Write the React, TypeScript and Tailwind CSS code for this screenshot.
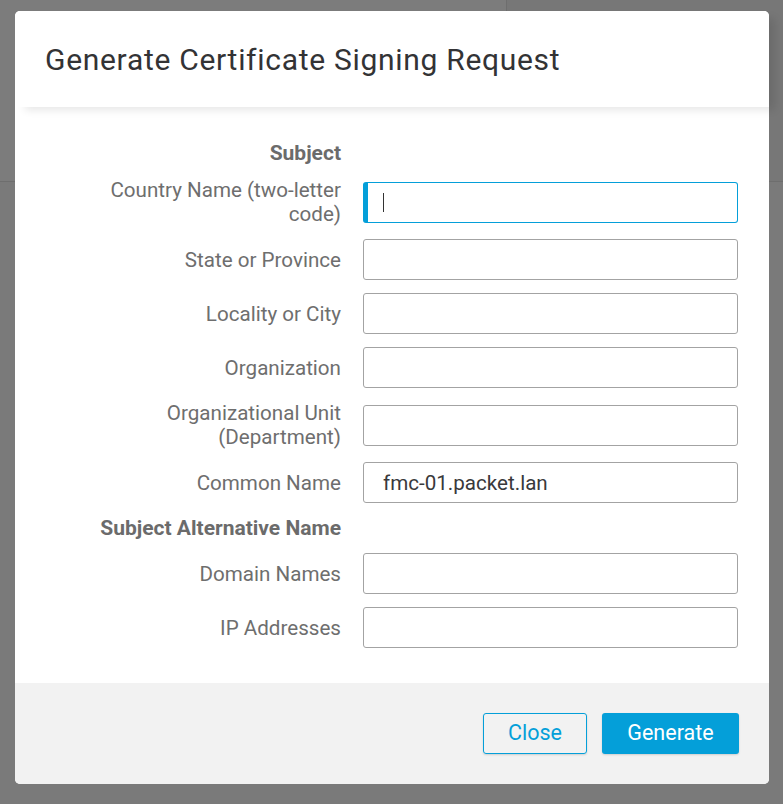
import React from "react"

// Modal "Generate Certificate Signing Request" over a dimmed page.

type Field = { label: string; value?: string; focused?: boolean; heading?: boolean }

const fields: Field[] = [
    { label: "Subject", heading: true },
    { label: "Country Name (two-letter code)", focused: true },
    { label: "State or Province" },
    { label: "Locality or City" },
    { label: "Organization" },
    { label: "Organizational Unit (Department)" },
    { label: "Common Name", value: "fmc-01.packet.lan" },
    { label: "Subject Alternative Name", heading: true },
    { label: "Domain Names" },
    { label: "IP Addresses" },
]

function FormRow({ field }: { field: Field }) {
    if (field.heading) {
        return (
            <div className="flex">
                <div className="w-[250px] text-right text-[21px] leading-6 font-bold text-[#6b6b6b]">{field.label}</div>
            </div>
        )
    }
    return (
        <div className="flex items-center gap-[22px]">
            <label className="w-[250px] text-right text-[20.6px] leading-6 text-[#6e6e6e]">{field.label}</label>
            {field.focused ? (
                <div className="relative">
                    <input
                        readOnly
                        className="h-[41px] w-[375px] rounded-[3px] border border-l-[5px] border-[#049fd9] bg-white pl-[15px] text-[20.6px] text-[#39393b] outline-none"
                    />
                    <span className="absolute top-[11px] left-[20px] h-[19px] w-px bg-[#333]" />
                </div>
            ) : (
                <input
                    readOnly
                    value={field.value ?? ""}
                    className="h-[41px] w-[375px] rounded-[3px] border border-[#a3a3a3] bg-white px-[19px] text-[20.6px] text-[#39393b] outline-none"
                />
            )}
        </div>
    )
}

export default function App() {
    return (
        <div className="relative h-[804px] w-[783px] overflow-hidden bg-[#7a7a7a] font-['Roboto',sans-serif]">
            {/* page behind the overlay */}
            <div className="flex h-[182px] border-b border-[#6e6e6e]">
                <div className="w-[507px] border-r border-[#6e6e6e] bg-[#7c7c7c]" />
                <div className="flex-1 bg-[#777]" />
            </div>

            <div className="absolute top-[11px] left-[15px] flex h-[773px] w-[754px] flex-col rounded-[5px] bg-white">
                <div className="relative z-10 flex h-[96px] items-center rounded-t-[5px] bg-white px-[30px] shadow-[8px_5px_8px_-2px_rgba(0,0,0,0.1)]">
                    <h1 className="text-[30px] tracking-[0.7px] text-[#333335]">Generate Certificate Signing Request</h1>
                </div>

                <div className="flex flex-col gap-[13px] pt-[34px] pr-[30px] pl-[76px]">
                    {fields.map((f) => (
                        <FormRow key={f.label} field={f} />
                    ))}
                </div>

                <div className="mt-auto flex h-[101px] items-start justify-end gap-[15px] rounded-b-[5px] bg-[#f2f2f2] pt-[30px] pr-[30px]">
                    <button className="h-[41px] w-[104px] rounded-[3px] border border-[#049fd9] text-[21.5px] text-[#049fd9] shadow-[0_1px_2px_rgba(0,0,0,0.15)]">
                        Close
                    </button>
                    <button className="h-[41px] w-[137px] rounded-[3px] bg-[#049fd9] text-[21.5px] text-white shadow-[0_1px_2px_rgba(0,0,0,0.15)]">
                        Generate
                    </button>
                </div>
            </div>
        </div>
    )
}
